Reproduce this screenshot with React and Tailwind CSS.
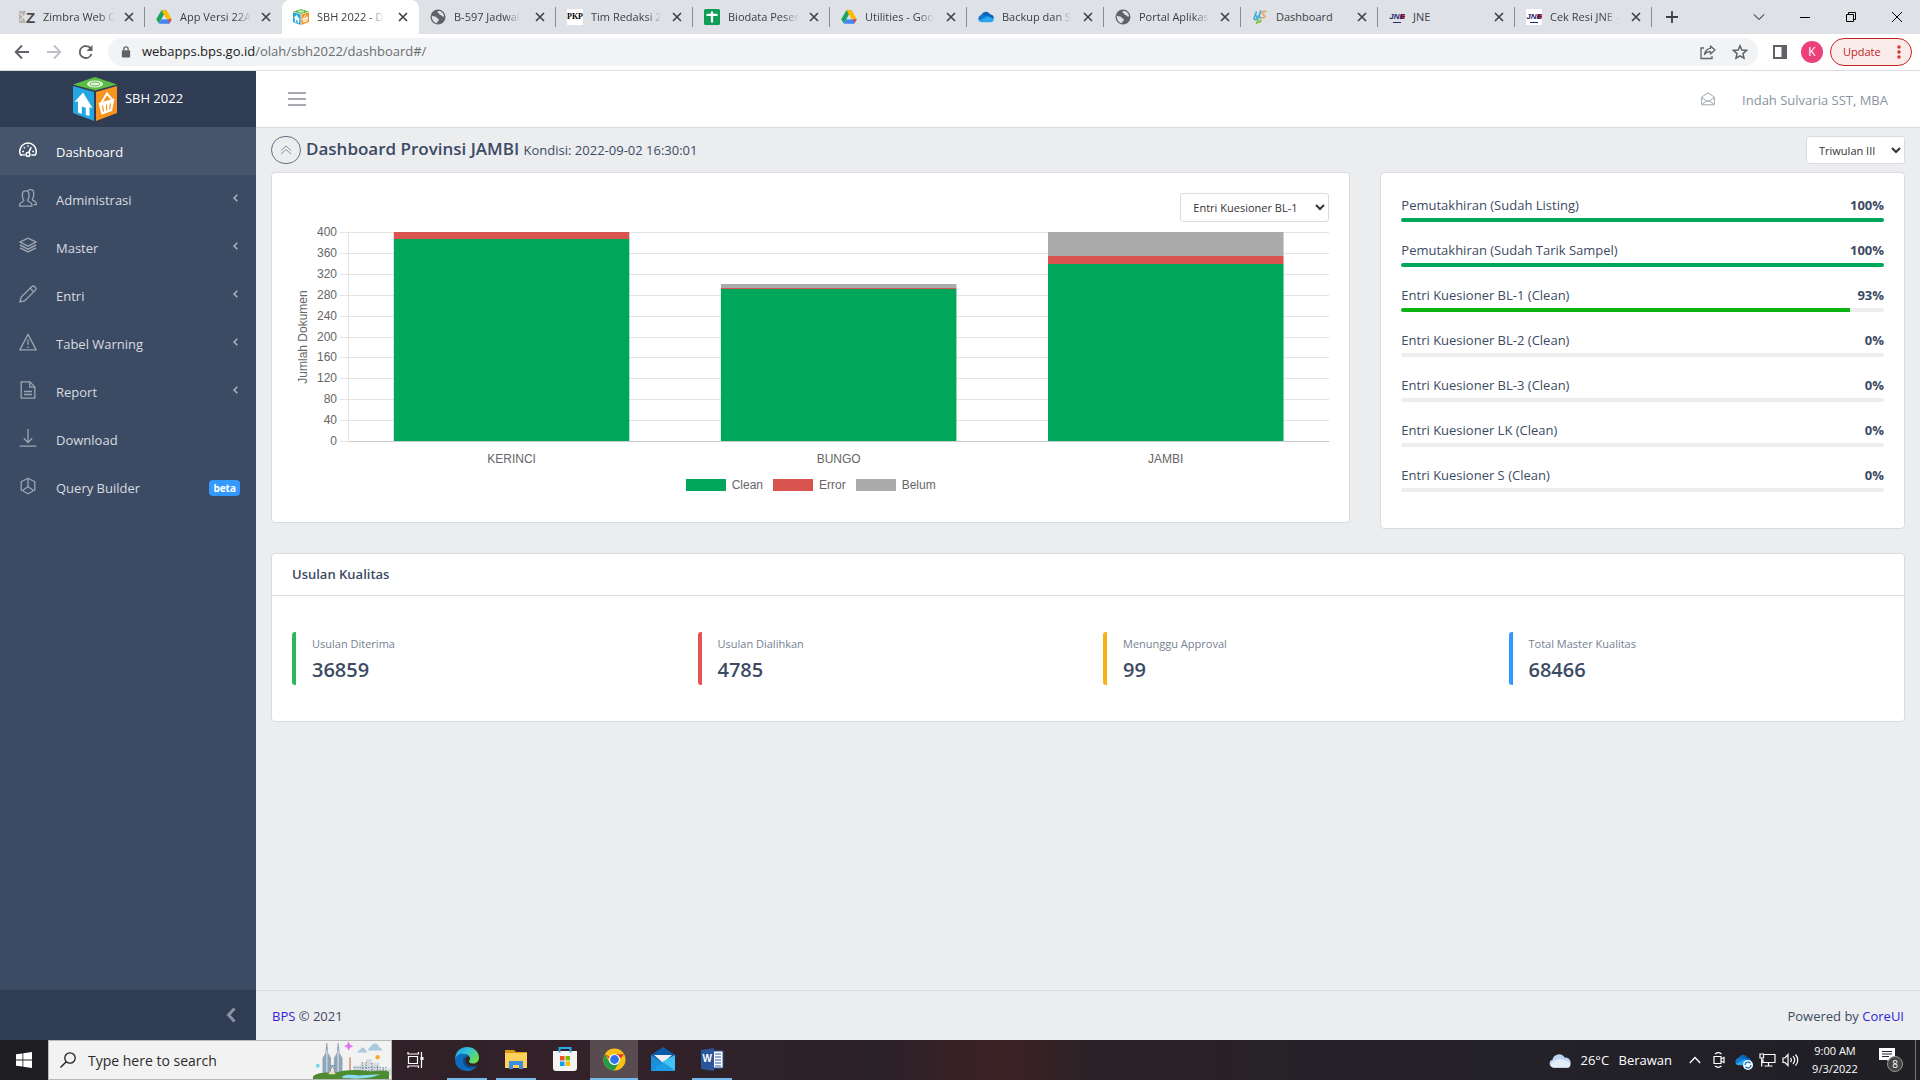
import React from "react";

/* ---------- small icons ---------- */

const Line = ({ size = 18, w = 1.4, className = "", children }) => (
  <svg width={size} height={size} viewBox="0 0 18 18" fill="none" stroke="currentColor" strokeWidth={w} className={className} aria-hidden="true">
    {children}
  </svg>
);

const navIcons = {
  dashboard: (
    <>
      <path d="M3.2 13.9H1.6C1 12.700.7 11.500.7 10.200.7 5.700 4.400 2 9 2s8.300 3.700 8.300 8.200c0 1.300-.3 2.500-.9 3.700h-4" strokeWidth="1.500" />
      <circle cx="9" cy="13.400" r="1.900" strokeWidth="1.500" />
      <path d="M9.700 11.600l2.500-5.400" strokeWidth="1.600" />
      <path d="M3.200 10.600h1.800M13.200 10.600H15M4.800 6.200l1.100 1.100M9 4.200v1.600" strokeWidth="1.500" />
      <path d="M1.600 13.900h4.400" />
    </>
  ),
  people: (
    <>
      <path d="M.7 17.200v-2.400c0-.9 4.200-2.200 4.200-3.200 0-1-1.500-1.700-1.500-4.200V5.200c0-2 1.400-3.300 3.300-3.300S10 3.200 10 5.200v2.200c0 2.500-1.400 3.200-1.400 4.200s4.200 2.300 4.200 3.200v2.400z" />
      <path d="M8.800 1.800c.6-.7 1.500-1.100 2.600-1.100 1.900 0 3.300 1.300 3.300 3.200v2.400c0 2.500-1.400 3.200-1.400 4.200s4 2.200 4 3.200v2h-3" />
    </>
  ),
  layers: (
    <>
      <path d="M9 1.200l8 3.900-8 4.100-8-4.100z" />
      <path d="M1 8l8 4.100L17 8M1 10.800l8 4.100 8-4.100" strokeWidth="1.500" />
    </>
  ),
  pencil: (
    <>
      <path d="M1 17l1-4.600L12.600 1.800c.9-.9 2.200-.9 3.100 0l.5.5c.9.9.9 2.200 0 3.100L5.600 16z" />
      <path d="M11.200 3.200l3.600 3.600" />
    </>
  ),
  warning: (
    <>
      <path d="M9 1.400L17.200 16.900H.8z" strokeLinejoin="round" />
      <path d="M9 6.600v5.200M9 13.400v1.600" strokeWidth="1.300" />
    </>
  ),
  report: (
    <>
      <path d="M2.200.8h8.600l5 5v11.400H2.200z" />
      <path d="M10.800.8v5.300h5M5 10.500h8M5 13.500h8" />
    </>
  ),
  download: <path d="M.6 17.100h16.800M9 0v13.200M4.800 9.200L9 13.500l4.200-4.300" />,
  cube: (
    <>
      <path d="M9 1.200l6.800 3.600v8.200L9 16.800l-6.800-3.800V4.800z" strokeLinejoin="round" />
      <path d="M9 1.500v8.200M9 9.700l-6 4M9 9.700l6 4" />
    </>
  ),
};

const CubeLogo = ({ className }) => (
  <svg viewBox="0 0 44 44" className={className} aria-hidden="true">
    <path d="M0 7.500L22 0l22 7.500-22 6z" fill="#5dbb46" />
    <ellipse cx="22" cy="7" rx="8" ry="3.500" fill="#e6f5e1" />
    <ellipse cx="22" cy="7" rx="5" ry="2" fill="none" stroke="#5dbb46" strokeWidth="1" />
    <path d="M0 9l21 6v29L0 36z" fill="#24a7e0" />
    <path d="M44 9l-21 6v29l21-8z" fill="#f7931e" />
    <path d="M1.500 25L10 15.500 19.500 31l-3-.8V39l-3.700-1.100v-7.200l-4-1.100v7.200L5 35.700V24.500z" fill="#fff" />
    <path d="M25.500 26l16-4.500-2.500 12.500-10.500 3.800z" fill="#fff" />
    <path d="M28.500 25.500L34 16.500l5 6" fill="none" stroke="#fff" strokeWidth="2" />
    <path d="M29.500 28.500l1 6M33.500 27.500v6M37.500 26.500l-1 6" stroke="#f7931e" strokeWidth="1.200" />
  </svg>
);

const Drive = () => (
  <svg viewBox="0 0 16 16" className="size-4" aria-hidden="true">
    <path d="M5.400 1.300h5.200L5.500 10.200 2.800 14.600.2 10.200z" fill="#1ea362" />
    <path d="M5.400 1.300h5.200l5.200 8.900h-5.200z" fill="#ffba00" />
    <path d="M5.500 10.200h10.300l-2.600 4.500H2.800z" fill="#4285f4" />
    <path d="M12.500 10.200h3.300l-2.600 4.500z" fill="#ea4335" />
    <path d="M8 5.800l2.600 4.400H5.500z" fill="#dee1e6" />
  </svg>
);

const Globe = () => (
  <svg viewBox="0 0 16 16" className="size-4" aria-hidden="true">
    <circle cx="8" cy="8" r="7.500" fill="#5f6368" />
    <path d="M1.800 6.500c2 1.500 4.200.2 4.800 2 .5 1.500 2.400.6 2.200 2.500-.1 1.200-1.600 1.200-1.800 3.200C4 13.600 1.600 11.200 1.800 6.500z" fill="#dee1e6" />
    <path d="M8.500 2c-1.800.8-1.400 1.800.1 2 .8.2.3 1.800 1.600 1.900 1.700.1 1.300 1.900 3.900 1.600C14 4.600 11.500 1.900 8.500 2z" fill="#dee1e6" />
  </svg>
);

const Sheets = () => (
  <svg viewBox="0 0 16 16" className="size-4" aria-hidden="true">
    <rect width="16" height="16" rx="1.500" fill="#0f9d58" />
    <path d="M2.500 5.800h11M8 2.500v11" stroke="#fff" strokeWidth="2.200" />
  </svg>
);

const OneDrive = ({ className = "size-4" }) => (
  <svg viewBox="0 0 16 16" className={className} aria-hidden="true">
    <path d="M3.500 12.500A3.500 3.500 0 013.300 6a5 5 0 019-.6 3.600 3.600 0 013.500 3.800L9 13z" fill="#0a63b8" />
    <path d="M.8 11.500L9 7l6.800 2.500c.3 1.800-1 3.700-3 3.700H3.500c-1.300 0-2.300-.7-2.700-1.700z" fill="#28a8ea" />
    <path d="M3.300 6C1 6.300-.3 9.200.8 11.500L9 7.600 6.500 6z" fill="#0f78d4" />
  </svg>
);

const BpsMark = () => (
  <svg viewBox="0 0 16 16" className="size-4" fill="none" aria-hidden="true">
    <path d="M4.500 2.500L2.200 9c-.5 1.600 1.600 2.300 2.500.6s.5-3-.9-2.900" stroke="#3ba9dc" strokeWidth="1.600" />
    <path d="M9 1.500L7 7c-.6 1.800 1.300 2.300 2 .8" stroke="#3ba9dc" strokeWidth="1.800" />
    <path d="M6.500 9.500L4.500 15M6.300 13c1.600.4 2.700-.8 2.500-2.300" stroke="#7bc143" strokeWidth="1.800" />
    <path d="M14.300 3.200c-1.600-1.600-4-.8-3.700 1.100s2.800 1.600 2.100 3.600c-.6 1.300-2 1.300-2.900.5" stroke="#f0a55a" strokeWidth="1.800" />
  </svg>
);

const Jne = ({ boxed }) => (
  <span className={"relative flex size-4 items-center justify-center " + (boxed ? "bg-white" : "")}>
    <span className="absolute top-[5px] right-0 size-[5px] rounded-full bg-[#f0202c]" />
    <span className="relative font-['Liberation_Sans'] text-[8px] leading-none font-bold text-[#262569] italic">JNE</span>
    <span className="absolute right-1 bottom-[2px] h-px w-2 bg-[#262569]" />
  </span>
);

const Zimbra = () => (
  <span className="flex size-4 items-center">
    <svg viewBox="0 0 7 12" className="h-3 w-[7px] shrink-0" aria-hidden="true">
      <path d="M0 0h7L4.500 6 7 12H0z" fill="#b4b4b4" />
      <path d="M1 2l3.500 4L1 10" fill="none" stroke="#fff" strokeWidth="1" />
    </svg>
    <span className="font-['Liberation_Sans'] text-[15px] leading-none font-bold text-[#4a4a4a]">Z</span>
  </span>
);

const Pkp = () => (
  <span className="flex size-4 items-center justify-center bg-white font-['Liberation_Serif'] text-[8px] leading-none font-bold text-black">PKP</span>
);

const CloseX = () => (
  <svg viewBox="0 0 10 10" className="size-[10px]" aria-hidden="true">
    <path d="M1 1l8 8M9 1L1 9" stroke="#3c4043" strokeWidth="1.600" />
  </svg>
);

/* ---------- browser chrome ---------- */

const tabs = [
  { icon: <Zimbra />, title: "Zimbra Web C" },
  { icon: <Drive />, title: "App Versi 22A", noSep: true },
  { icon: <CubeLogo className="size-4" />, title: "SBH 2022 - D", active: true },
  { icon: <Globe />, title: "B-597 Jadwal" },
  { icon: <Pkp />, title: "Tim Redaksi 2" },
  { icon: <Sheets />, title: "Biodata Peser" },
  { icon: <Drive />, title: "Utilities - Goo" },
  { icon: <OneDrive />, title: "Backup dan S" },
  { icon: <Globe />, title: "Portal Aplikas" },
  { icon: <BpsMark />, title: "Dashboard", short: true },
  { icon: <Jne />, title: "JNE", short: true },
  { icon: <Jne boxed />, title: "Cek Resi JNE -" },
];

function Tab({ icon, title, active, noSep, short }) {
  return (
    <div className={"flex h-[34px] w-[137px] min-w-0 items-center " + (active ? "rounded-t-lg bg-white" : "")}>
      <button className="flex h-full min-w-0 flex-1 items-center gap-2 pl-[11px] text-left">
        <span className="shrink-0">{icon}</span>
        <span
          className={
            "text-[11px] whitespace-nowrap text-[#3c4043] " +
            (short ? "" : "[mask-image:linear-gradient(to_right,black_78%,transparent)]")
          }
        >
          {title}
        </span>
      </button>
      <button aria-label={"Close " + title} className="flex w-[22px] justify-center">
        <CloseX />
      </button>
      <span className={"ml-1 h-5 w-px " + (active || noSep ? "bg-transparent" : "bg-[#8a8d91]")} />
    </div>
  );
}

function BrowserTop() {
  return (
    <header className="shrink-0 bg-white">
      <div className="flex h-[34px] items-center bg-[#dee1e6] pl-2">
        {tabs.map((t, i) => (
          <Tab key={i} {...t} />
        ))}
        <button aria-label="New tab" className="flex w-10 justify-center">
          <svg viewBox="0 0 12 12" className="size-3"><path d="M6 0v12M0 6h12" stroke="#3c4043" strokeWidth="1.800" /></svg>
        </button>
        <div className="ml-auto flex h-7 items-center text-black">
          <button aria-label="Search tabs" className="flex w-[46px] justify-center">
            <svg viewBox="0 0 12 12" className="size-3" fill="none" stroke="currentColor"><path d="M1 3.500l5 5 5-5" /></svg>
          </button>
          <button aria-label="Minimize" className="flex w-[46px] justify-center">
            <svg viewBox="0 0 12 12" className="size-3" stroke="currentColor"><path d="M1 6.500h10" /></svg>
          </button>
          <button aria-label="Restore" className="flex w-[46px] justify-center">
            <svg viewBox="0 0 12 12" className="size-3" fill="none" stroke="currentColor"><path d="M1.500 3.500h7v7h-7zM3.500 3.500v-2h7v7h-2" /></svg>
          </button>
          <button aria-label="Close window" className="flex w-[46px] justify-center">
            <svg viewBox="0 0 12 12" className="size-3" stroke="currentColor"><path d="M1 1l10 10M11 1L1 11" /></svg>
          </button>
        </div>
      </div>

      <div className="flex h-[37px] items-center border-b border-[#dadce0] pr-2 pl-[6px]">
        <button aria-label="Back" className="flex w-8 justify-center text-[#5f6368]">
          <svg viewBox="0 0 16 16" className="size-4" fill="none" stroke="currentColor" strokeWidth="1.900"><path d="M15 8H2M8 1.500L1.700 8 8 14.500" /></svg>
        </button>
        <button aria-label="Forward" className="flex w-8 justify-center text-[#bdc1c6]">
          <svg viewBox="0 0 16 16" className="size-4" fill="none" stroke="currentColor" strokeWidth="1.900"><path d="M1 8h13M8 1.500L14.300 8 8 14.500" /></svg>
        </button>
        <button aria-label="Reload" className="flex w-8 justify-center text-[#5f6368]">
          <svg viewBox="0 0 16 16" className="size-4" fill="none" stroke="currentColor" strokeWidth="1.900">
            <path d="M13.500 10A6 6 0 118 2c1.900 0 3.400.8 4.600 2.200" />
            <path d="M14.500 1v6h-6z" fill="currentColor" stroke="none" />
          </svg>
        </button>
        <div className="ml-[6px] flex h-7 min-w-0 flex-1 items-center rounded-full bg-[#f1f3f4] pr-[2px] pl-[13px]">
          <svg viewBox="0 0 10 13" className="h-3 w-[10px] shrink-0" aria-hidden="true">
            <rect x="0.500" y="4.500" width="9" height="8" rx="1" fill="#5f6368" />
            <path d="M2.700 5V3.200a2.300 2.300 0 014.600 0V5" fill="none" stroke="#5f6368" strokeWidth="1.400" />
          </svg>
          <span className="ml-[11px] flex-1 text-[13px] whitespace-nowrap text-[#6a6e73]">
            <span className="text-[#202124]">webapps.bps.go.id</span>/olah/sbh2022/dashboard#/
          </span>
          <button aria-label="Share" className="flex w-8 justify-center text-[#5f6368]">
            <svg viewBox="0 0 16 16" className="size-4" fill="none" stroke="currentColor" strokeWidth="1.300">
              <path d="M4 4H1v10.500h11V12" />
              <path d="M10.500 2l4.500 4-4.500 4V7.700C7.500 7.500 5.700 8.600 4.500 10.500 5 7 7 4.800 10.500 4.300z" strokeLinejoin="round" />
            </svg>
          </button>
          <button aria-label="Bookmark" className="flex w-8 justify-center text-[#5f6368]">
            <svg viewBox="0 0 16 16" className="size-4" fill="none" stroke="currentColor" strokeWidth="1.500">
              <path d="M8 1.800l1.800 4.300 4.700.4L11 9.600l1 4.600-4-2.400-4 2.400 1-4.600-3.500-3.100 4.700-.4z" />
            </svg>
          </button>
        </div>
        <button aria-label="Side panel" className="ml-[15px] text-[#5f6368]">
          <svg viewBox="0 0 14 14" className="size-[14px]"><path d="M0 0h14v14H0zM2 2v10h6.500V2z" fill="currentColor" fillRule="evenodd" /></svg>
        </button>
        <button className="ml-[14px] flex size-[22px] items-center justify-center rounded-full bg-[#ec407a] text-[12px] text-white">K</button>
        <button className="ml-[7px] flex h-7 w-[82px] items-center justify-between rounded-full border border-[#c5221f] bg-[#faeceb] pr-[10px] pl-3 text-[11px] text-[#c5221f]">
          Update
          <svg viewBox="0 0 4 14" className="h-[14px] w-1" fill="#d93025"><circle cx="2" cy="2" r="1.700" /><circle cx="2" cy="7" r="1.700" /><circle cx="2" cy="12" r="1.700" /></svg>
        </button>
      </div>
    </header>
  );
}

/* ---------- sidebar ---------- */

const nav = [
  { label: "Dashboard", icon: "dashboard", active: true },
  { label: "Administrasi", icon: "people", group: true },
  { label: "Master", icon: "layers", group: true },
  { label: "Entri", icon: "pencil", group: true },
  { label: "Tabel Warning", icon: "warning", group: true },
  { label: "Report", icon: "report", group: true },
  { label: "Download", icon: "download" },
  { label: "Query Builder", icon: "cube", badge: "beta" },
];

function Sidebar() {
  return (
    <aside className="flex w-64 shrink-0 flex-col bg-[#3c4b64]">
      <div className="flex h-14 items-center justify-center gap-2 bg-[#303c54] text-white">
        <CubeLogo className="size-11" />
        <span className="text-[13px]">SBH 2022</span>
      </div>
      <nav className="flex-1">
        {nav.map((n) => (
          <a
            key={n.label}
            href="#/"
            className={
              "flex h-12 items-center pt-[3px] pr-4 pl-[19px] text-[13px] " +
              (n.active ? "bg-[#46546c] text-white" : "text-[#d8dbe0]")
            }
          >
            <Line w={1.3} className={"mb-[5px] " + (n.active ? "text-white" : "text-[#9da5b1]")}>{navIcons[n.icon]}</Line>
            <span className="ml-[19px] flex-1">{n.label}</span>
            {n.group && (
              <svg viewBox="0 0 5 8" className="mr-[2px] mb-[5px] h-2 w-[5px]" fill="none" stroke="#b1b7c1" strokeWidth="1.500"><path d="M4.300.7L1 4l3.300 3.300" /></svg>
            )}
            {n.badge && <span className="mb-[2px] flex h-4 items-center rounded-[4px] bg-[#3399ff] px-1 text-[10px] leading-none font-bold text-white">{n.badge}</span>}
          </a>
        ))}
      </nav>
      <button aria-label="Minimize sidebar" className="flex h-[50px] items-center justify-end bg-[#303c54] pr-5">
        <svg viewBox="0 0 10 16" className="h-4 w-[10px]" fill="none" stroke="#8a93a2" strokeWidth="3"><path d="M8.500 1.500L2.500 8l6 6.500" /></svg>
      </button>
    </aside>
  );
}

/* ---------- chart ---------- */

const chartData = [
  { name: "KERINCI", clean: 386, error: 14, belum: 0 },
  { name: "BUNGO", clean: 291, error: 2, belum: 7 },
  { name: "JAMBI", clean: 339, error: 15, belum: 46 },
];
const ticks = [400, 360, 320, 280, 240, 200, 160, 120, 80, 40, 0];
const yOf = (v) => Math.round(219 - (v * 209) / 400);

function Chart() {
  return (
    <div className="font-['Liberation_Sans',sans-serif] text-[12px] text-[#666]">
      <div className="flex">
        <svg className="h-[250px] w-14 shrink-0" aria-hidden="true">
          <text transform="translate(15 115) rotate(-90)" textAnchor="middle" fill="#666" fontSize="12">Jumlah Dokumen</text>
          {ticks.map((t) => (
            <g key={t}>
              <text x="45" y={yOf(t) + 4} textAnchor="end" fill="#666" fontSize="12">{t}</text>
              <path d={`M48 ${yOf(t) + 0.5}H56`} stroke="#e5e5e5" />
            </g>
          ))}
        </svg>
        <svg className="h-[250px] min-w-0 flex-1 overflow-visible" role="img" aria-label="Jumlah Dokumen">
          {ticks.map((t) => (
            <line key={t} x1="0" x2="100%" y1={yOf(t) + 0.5} y2={yOf(t) + 0.5} stroke={t === 0 ? "#cbcbcb" : "#e5e5e5"} />
          ))}
          <line x1="0.500" x2="0.500" y1="10" y2="220" stroke="#e5e5e5" />
          {chartData.map((d, i) => {
            const x = `${(i + 0.14) * 33.333}%`;
            const a = yOf(d.clean);
            const b = yOf(d.clean + d.error);
            const c = yOf(d.clean + d.error + d.belum);
            return (
              <g key={d.name}>
                <rect x={x} width="24%" y={a} height={219 - a} fill="#00a65a" />
                <rect x={x} width="24%" y={b} height={a - b} fill="#d9534f" />
                <rect x={x} width="24%" y={c} height={b - c} fill="#ababab" />
                <text x={`${(i + 0.5) * 33.333}%`} y="241" textAnchor="middle" fill="#666" fontSize="12">{d.name}</text>
              </g>
            );
          })}
        </svg>
      </div>
      <div className="mb-1 flex h-[26px] items-center justify-center gap-[10px]">
        <span className="flex items-center gap-[6px]"><i className="h-3 w-10 bg-[#00a65a]" />Clean</span>
        <span className="flex items-center gap-[6px]"><i className="h-3 w-10 bg-[#d9534f]" />Error</span>
        <span className="flex items-center gap-[6px]"><i className="h-3 w-10 bg-[#ababab]" />Belum</span>
      </div>
    </div>
  );
}

/* ---------- dashboard ---------- */

const progress = [
  ["Pemutakhiran (Sudah Listing)", 100, "bg-[#00a65a]"],
  ["Pemutakhiran (Sudah Tarik Sampel)", 100, "bg-[#00a65a]"],
  ["Entri Kuesioner BL-1 (Clean)", 93, "bg-[#0cb112]"],
  ["Entri Kuesioner BL-2 (Clean)", 0, ""],
  ["Entri Kuesioner BL-3 (Clean)", 0, ""],
  ["Entri Kuesioner LK (Clean)", 0, ""],
  ["Entri Kuesioner S (Clean)", 0, ""],
];

const stats = [
  ["Usulan Diterima", "36859", "border-[#2eb85c]"],
  ["Usulan Dialihkan", "4785", "border-[#e55353]"],
  ["Menunggu Approval", "99", "border-[#f9b115]"],
  ["Total Master Kualitas", "68466", "border-[#3399ff]"],
];

function Main() {
  return (
    <div className="flex min-w-0 flex-1 flex-col bg-[#ebedef] text-[#3c4b64]">
      <header className="flex h-[57px] items-center border-b border-[#d8dbe0] bg-white px-8">
        <button aria-label="Toggle menu">
          <svg viewBox="0 0 18 14" className="h-[14px] w-[18px]" stroke="#8a8d99" strokeWidth="1.600"><path d="M0 1h18M0 7h18M0 13h18" /></svg>
        </button>
        <button aria-label="Messages" className="ml-auto text-[#9da5b1]">
          <svg viewBox="0 0 14 14" className="size-[14px]" fill="none" stroke="currentColor">
            <path d="M.7 12.800V5L7 .8 13.300 5v7.800zM.7 5.500L5.500 9h3l4.800-3.500M1 12.500L5.500 9h3l4.500 3.500" />
          </svg>
        </button>
        <button className="ml-[27px] pt-[3px] text-[13px] text-[#8a93a2]">Indah Sulvaria SST, MBA</button>
      </header>

      <main className="flex-1 px-[15px] pt-2">
        <div className="flex h-7 items-center">
          <button aria-label="Collapse" className="flex h-7 w-[30px] items-center justify-center rounded-full border border-[#636f83]">
            <svg viewBox="0 0 12 10" className="h-[10px] w-3" fill="none" stroke="#8a93a2"><path d="M1 5.500L6 1l5 4.500M1 9l5-4.500L11 9" /></svg>
          </button>
          <h1 className="mb-[2px] ml-[5px] text-[17px] font-semibold">
            Dashboard Provinsi JAMBI <small className="text-[13px] font-normal">Kondisi: 2022-09-02 16:30:01</small>
          </h1>
          <select aria-label="Triwulan" className="ml-auto h-7 w-[99px] rounded-[3px] border border-[#d8dbe0] bg-white pl-2 text-[11px] text-[#333]">
            <option>Triwulan III</option>
          </select>
        </div>

        <div className="mt-2 grid grid-cols-3 items-start gap-x-[30px]">
          <section className="col-span-2 rounded border border-[#d8dbe0] bg-white p-5">
            <div className="flex justify-end">
              <select aria-label="Kuesioner" className="h-[29px] w-[149px] rounded-[3px] border border-[#d8dbe0] bg-white pl-2 text-[11px] text-[#333]">
                <option>Entri Kuesioner BL-1</option>
              </select>
            </div>
            <Chart />
          </section>
          <section className="rounded border border-[#d8dbe0] bg-white p-5">
            {progress.map(([label, value, color]) => (
              <div key={label} className="mb-4">
                <div className="flex justify-between pt-px text-[13px] leading-[22px]">
                  <span>{label}</span>
                  <b>{value}%</b>
                </div>
                <div className="mt-[2px] h-1 overflow-hidden rounded-[2px] bg-[#ebedef]" role="progressbar" aria-label={label} aria-valuenow={value}>
                  <div className={"h-full " + color} style={{ width: value + "%" }} />
                </div>
              </div>
            ))}
          </section>
        </div>

        <section className="mt-6 rounded border border-[#d8dbe0] bg-white">
          <h2 className="border-b border-[#d8dbe0] px-5 py-[10px] text-[13px] leading-[21px] font-semibold">Usulan Kualitas</h2>
          <div className="grid grid-cols-4 gap-x-[30px] px-5 py-9">
            {stats.map(([label, value, color]) => (
              <div key={label} className={"flex h-[53px] flex-col rounded-[3px] border-l-4 pl-4 " + color}>
                <span className="mt-[3px] text-[11px] leading-[18px] text-[#768192]">{label}</span>
                <strong className="text-[20px] leading-[34px] font-semibold">{value}</strong>
              </div>
            ))}
          </div>
        </section>
      </main>

      <footer className="flex h-[50px] items-center justify-between border-t border-[#d8dbe0] px-4 pt-[2px] text-[13px]">
        <span><a href="#/" className="text-[#321fdb]">BPS</a> © 2021</span>
        <span>Powered by <a href="#/" className="text-[#321fdb]">CoreUI</a></span>
      </footer>
    </div>
  );
}

/* ---------- taskbar ---------- */

const City = () => (
  <svg viewBox="0 0 80 40" className="h-[38px] w-20 shrink-0" aria-hidden="true">
    <path d="M38 17h2v19h-2z" fill="#d9a58c" />
    <path d="M42 26h8v-3h6v-4h6v4h8v6h12v7H42z" fill="#d5dbe0" />
    <path d="M43 28h36M43 31h36M52 22v12M56 22v12M62 23v11M68 26v8M74 29v6" stroke="#6b8390" strokeDasharray="1.500 1.500" />
    <path d="M10 36V18l3-5 1-11h1l1 11 3 5v18zM22 36V18l3-5 1-11h1l1 11 3 5v18z" fill="#8fa5b8" />
    <path d="M14.500 10v26M26.500 10v26" stroke="#c9d6df" strokeWidth="1.500" />
    <path d="M18 26h6M18 31l2.500-5 2.500 5" stroke="#768da0" fill="none" />
    <path d="M0 40v-3c8-5 16-4 22-3 8-3 20-4 30-3 10 2 20-1 28 1v8z" fill="#4d8b31" />
    <path d="M20 30l4 5h-8z" fill="#f1ddc4" />
    <path d="M31 37c8-3 14 0 20-1l20-1-8 3c-12 2-20 2-32 1z" fill="#8fdcf2" />
    <path d="M37.500 1c.6 3 1.500 4 4 4.500-2.500.5-3.400 1.500-4 4-.6-2.500-1.500-3.500-4-4 2.500-.5 3.400-1.500 4-4.500z" fill="#e570f5" stroke="#e570f5" />
    <circle cx="5" cy="26" r="2" fill="#6fd5ee" />
    <circle cx="68" cy="17" r="2.300" fill="#f9ab1a" />
    <path d="M47 12c0-3 3-2 4-5 3-1 5 3 6 5zM58 10c0-3 3-3 4-6 4-3 7 0 8 3 3 0 3 3 3 3z" fill="#a9c9dc" />
  </svg>
);

function AppButton({ label, running, active, children }) {
  return (
    <button aria-label={label} className={"flex h-10 w-12 flex-col items-center " + (active ? "bg-[#594c50]" : "")}>
      <span className="flex flex-1 items-center">{children}</span>
      <span className={"h-[2px] " + (active ? "w-12" : "w-10") + (running ? " bg-[#76b9ed]" : "")} />
    </button>
  );
}

function Taskbar() {
  return (
    <footer className="flex h-10 shrink-0 items-center bg-[linear-gradient(90deg,#1d1d22_0%,#2a2024_12%,#34222a_30%,#2b2128_46%,#3d2225_52%,#2a2227_57%,#25222a_75%,#201f24_100%)] text-white">
      <button aria-label="Start" className="flex w-12 justify-center">
        <svg viewBox="0 0 16 16" className="size-4" fill="#fff"><path d="M0 2.300l6.500-.9v6.200H0zM7.300 1.300L16 0v7.600H7.300zM0 8.400h6.500v6.200L0 13.700zM7.300 8.400H16V16l-8.700-1.300z" /></svg>
      </button>
      <label className="flex h-10 w-[344px] items-center border border-[#b8b8b8] bg-[#f2f2f2]">
        <svg viewBox="0 0 16 16" className="ml-[11px] size-4 shrink-0" fill="none" stroke="#1d1d1d" strokeWidth="1.300"><circle cx="10" cy="6" r="5.200" /><path d="M6.200 9.800L.5 15.500" /></svg>
        <input aria-label="Search" placeholder="Type here to search" className="ml-3 min-w-0 flex-1 bg-transparent text-[14px] text-[#2b2b2b] outline-none placeholder:text-[#2b2b2b]" />
        <City />
      </label>
      <button aria-label="Task view" className="flex w-[51px] justify-center pr-1">
        <svg viewBox="0 0 17 16" className="h-4 w-[17px]" fill="none" stroke="#fff" strokeWidth="1.200"><path d="M1.500 4.500h9v7h-9zM1 0v2h10.500V0M1 16v-2h10.500v2M14.500 0v16" /><path d="M13.500 5h3v3h-3z" fill="#fff" stroke="none" /></svg>
      </button>
      <div className="flex gap-px">
        <AppButton label="Edge" running>
          <svg viewBox="0 0 24 24" className="size-6">
            <defs>
              <linearGradient id="edgeTop" x1="0" y1="0" x2="1" y2="0.600"><stop offset="0" stopColor="#1a9be0" /><stop offset="0.500" stopColor="#35c1d8" /><stop offset="1" stopColor="#6be04e" /></linearGradient>
            </defs>
            <path d="M12 0c7 0 12 5 12 10.500 0 4-3 6-6 6-2.500 0-4-1-4-2 0-.8 1-1 1-3 0-2.500-2.500-4.500-6-4.500C4 7 .5 10.500 0 13 0 5 5 0 12 0z" fill="url(#edgeTop)" />
            <path d="M0 12.500C.5 9 4 6.500 8 6.700c3 .1 5 1.300 6 2.800-3-.5-5 2-5 5 0 4 3.500 7 7.500 6.500 2.500-.2 4-1 5.500-2-2 3.500-6 5-10 5C5 24 0 19 0 12.500z" fill="#0f6cbd" />
            <path d="M8 14c0-3 2-5 5-5-2 1-3 3-2.500 5.500.7 3.500 4.500 5 8.500 4.500 1.500-.2 2.500-.6 3.300-.8-2 2.400-5 3.500-8 2.800C10.500 20.300 8 17.500 8 14z" fill="#114a8b" />
          </svg>
        </AppButton>
        <AppButton label="File Explorer" running>
          <svg viewBox="0 0 22 20" className="h-5 w-[22px]"><path d="M0 1h9l2 2h11v6H0z" fill="#dd9b0f" /><path d="M0 4h22v15H0z" fill="#ffd05b" /><path d="M4 20v-8h14v8h-4v-4H8v4z" fill="#3b8ede" /></svg>
        </AppButton>
        <AppButton label="Store">
          <svg viewBox="0 0 24 24" className="size-6"><path d="M6.500 6V1h11v5" fill="none" stroke="#25a9e8" strokeWidth="2" /><path d="M0 4h24v17c0 2-1 3-3 3H3c-2 0-3-1-3-3z" fill="#f4f4f4" /><path d="M6.500 5.500V4M17.500 5.500V4" stroke="#25a9e8" strokeWidth="2" /><path d="M7 9h4.500v4.500H7z" fill="#f25022" /><path d="M12.500 9H17v4.500h-4.500z" fill="#7fba00" /><path d="M7 14.500h4.500V19H7z" fill="#00a4ef" /><path d="M12.500 14.500H17V19h-4.500z" fill="#ffb900" /></svg>
        </AppButton>
        <AppButton label="Chrome" running active>
          <svg viewBox="0 0 24 24" className="size-[23px]"><circle cx="12" cy="12" r="11.500" fill="#fbc116" /><path d="M12 12L2 6.200A11.500 11.500 0 0022 6.500H12z" fill="#e33b2e" /><path d="M2 6.200A11.500 11.500 0 0011.500 23.500L17 15l-10 0z" fill="#269a45" /><circle cx="12" cy="12" r="5.800" fill="#fff" /><circle cx="12" cy="12" r="4.600" fill="#2f73e8" /></svg>
        </AppButton>
        <AppButton label="Mail">
          <svg viewBox="0 0 24 24" className="size-6"><path d="M0 8l12-8 12 8-12 8z" fill="#0b5cad" /><path d="M3 8h18l-9 8z" fill="#f0f0f0" /><path d="M0 8l24 16H0z" fill="#1b8fdc" /><path d="M24 8v16L11 15z" fill="#3ec3f7" /><path d="M0 24l12-8.500L24 24z" fill="#1d9de5" /></svg>
        </AppButton>
        <AppButton label="Word" running>
          <span className="relative flex size-[23px] items-center">
            <svg viewBox="0 0 23 23" className="absolute inset-0 size-full"><path d="M11 3h11v17H11z" fill="#fff" stroke="#2b579a" /><path d="M14 6h6M14 9h6M14 12h6M14 15h6M14 18h6" stroke="#2b579a" /><path d="M0 2l13-2v23L0 21z" fill="#2b579a" /></svg>
            <span className="relative ml-[2px] font-['Liberation_Sans'] text-[10px] leading-none font-bold text-white">W</span>
          </span>
        </AppButton>
      </div>

      <div className="ml-auto flex h-10 items-center">
        <svg viewBox="0 0 22 15" className="h-[15px] w-[22px]" aria-hidden="true"><path d="M4 14.500a4 4 0 01-.5-7.800A6.500 6.500 0 0115.500 4.500a5 5 0 012 10z" fill="#bcd4f1" /><path d="M4 14.800a3.500 3.500 0 01.5-6.600c3-1 5-3 8-2a4.500 4.500 0 014 1.500c3 0 5 1.500 5 3.700 0 2-1.500 3.400-3.500 3.400z" fill="#e3ecf9" /></svg>
        <span className="ml-[9px] w-[38px] pt-px text-[13px]">26°C</span>
        <span className="pt-px text-[13px]">Berawan</span>
        <button aria-label="Hidden icons" className="ml-[17px]">
          <svg viewBox="0 0 12 8" className="h-2 w-3" fill="none" stroke="#fff" strokeWidth="1.300"><path d="M.8 7L6 1.500 11.200 7" /></svg>
        </button>
        <svg viewBox="0 0 12 16" className="ml-3 h-4 w-3" fill="none" stroke="#fff" strokeWidth="1.200" aria-hidden="true"><path d="M1 4.500h7v7H1zM8 7l3-1.500v5L8 9M2 2c2-1.600 4.500-1.600 6.500 0M2 14c2 1.600 4.500 1.600 6.500 0" /></svg>
        <span className="relative ml-[10px] flex size-4">
          <OneDrive />
          <svg viewBox="0 0 10 10" className="absolute -right-[2px] -bottom-[2px] size-[10px]" aria-hidden="true"><circle cx="5" cy="5" r="5" fill="#fff" /><path d="M2 5a3 3 0 015.500-1.600M8 5a3 3 0 01-5.500 1.600" fill="none" stroke="#0f78d4" strokeWidth="1.400" /></svg>
        </span>
        <svg viewBox="0 0 17 14" className="ml-2 h-[14px] w-[17px]" fill="none" stroke="#fff" strokeWidth="1.200" aria-hidden="true"><path d="M5 1.500h11v8H4v-3M9.500 9.500v3.500M5.500 13h8M1 1h3.500v4H1zM2.700 5v8.500" /></svg>
        <svg viewBox="0 0 17 14" className="ml-[6px] h-[14px] w-[17px]" fill="none" stroke="#fff" strokeWidth="1.200" aria-hidden="true"><path d="M1 5h2l3-3.500v11L3 9.500H1zM8.500 5c1 1.200 1 3 0 4.200M11 3.200c2 2.300 2 5.500 0 7.800M13.500 1.500c3 3.200 3 8 0 11.200" /></svg>
        <div className="w-[72px] text-center text-[11px] leading-[18px] whitespace-nowrap">
          <div>9:00 AM</div>
          <div>9/3/2022</div>
        </div>
        <button aria-label="Notifications" className="relative ml-2 flex size-6 items-start">
          <svg viewBox="0 0 16 16" className="size-4" aria-hidden="true"><path d="M0 0h16v12h-4v4l-4-4H0z" fill="#fff" /><path d="M3 3.500h10M3 6h10M3 8.500h7" stroke="#25222a" /></svg>
          <span className="absolute right-0 bottom-0 flex size-4 items-center justify-center rounded-full border border-[#999] bg-[#444] text-[10px] leading-none">8</span>
        </button>
        <span className="ml-3 h-10 w-px bg-[#777]" />
        <span className="w-1" />
      </div>
    </footer>
  );
}

export default function App() {
  return (
    <div className="flex min-h-screen flex-col font-['Open_Sans','Noto_Sans',sans-serif]">
      <BrowserTop />
      <div className="flex flex-1">
        <Sidebar />
        <Main />
      </div>
      <Taskbar />
    </div>
  );
}
